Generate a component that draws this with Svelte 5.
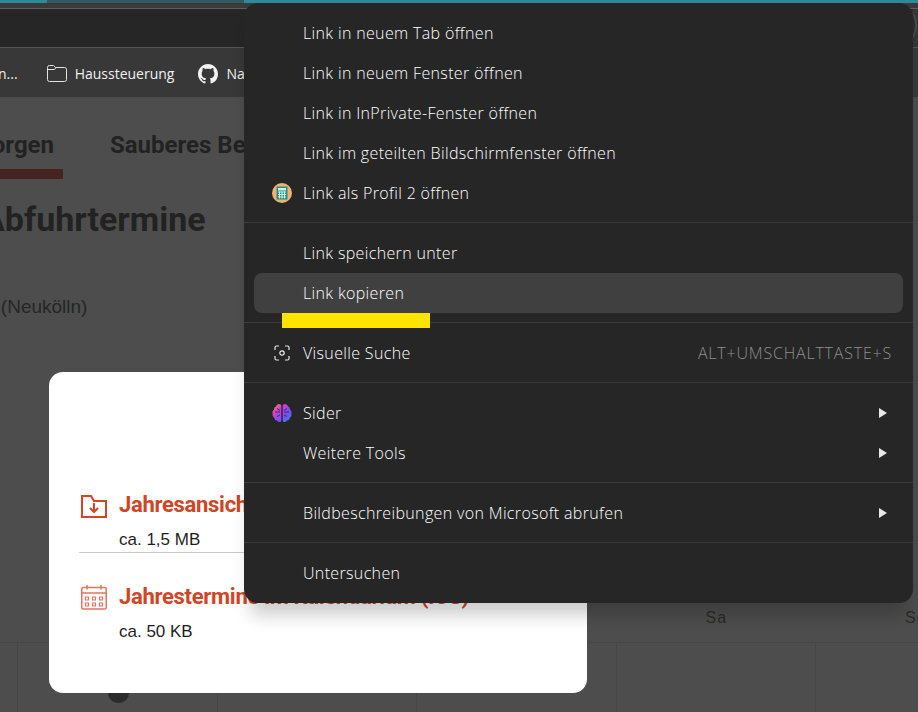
<script>
	const bookmarks = [
		{ label: 'n...', icon: null },
		{ label: 'Haussteuerung', icon: 'folder' },
		{ label: 'Nachrichten', icon: 'github' }
	];

	const menu = [
		[
			{ label: 'Link in neuem Tab öffnen' },
			{ label: 'Link in neuem Fenster öffnen' },
			{ label: 'Link in InPrivate-Fenster öffnen' },
			{ label: 'Link im geteilten Bildschirmfenster öffnen' },
			{ label: 'Link als Profil 2 öffnen', icon: 'profile' }
		],
		[{ label: 'Link speichern unter' }, { label: 'Link kopieren', active: true }],
		[{ label: 'Visuelle Suche', icon: 'lens', hint: 'ALT+UMSCHALTTASTE+S' }],
		[{ label: 'Sider', icon: 'brain', more: true }, { label: 'Weitere Tools', more: true }],
		[{ label: 'Bildbeschreibungen von Microsoft abrufen', more: true }],
		[{ label: 'Untersuchen' }]
	];

	// calendar is scrolled, only the end of the week is on screen
	const days = ['', 'Mi', 'Do', 'Fr', 'Sa', 'So'];
</script>

<div class="window">
	<div class="tabstrip">
		<div class="accent first"></div>
		<div class="accent dim"></div>
		<div class="accent"></div>
	</div>
	<div class="toolbar"></div>
	<div class="bookmarks">
		{#each bookmarks as b}
			<div class="bookmark">
				{#if b.icon === 'folder'}
					<svg width="20" height="20" viewBox="0 0 20 20" fill="none" stroke="#e4e4e4" stroke-width="1">
						<path d="M.5 3.500q0-2 2-2h4l2 2h9q2 0 2 2v10q0 2-2 2h-15q-2 0-2-2z" />
						<path d="M.5 5.500h7l1.500-2" />
					</svg>
				{:else if b.icon === 'github'}
					<svg width="20" height="20" viewBox="0 0 16 16" fill="#f2f2f2">
						<path d="M8 0C3.580 0 0 3.580 0 8c0 3.540 2.290 6.530 5.470 7.590.4.070.55-.17.55-.38 0-.19-.01-.82-.01-1.490-2.010.37-2.530-.49-2.690-.94-.09-.23-.48-.94-.82-1.130-.28-.15-.68-.52-.01-.53.63-.01 1.080.58 1.230.82.720 1.210 1.870.870 2.330.66.070-.52.280-.870.510-1.070-1.780-.2-3.640-.89-3.640-3.950 0-.87.310-1.590.820-2.150-.08-.2-.36-1.020.08-2.120 0 0 .67-.21 2.200.82.640-.18 1.320-.27 2-.27s1.360.09 2 .27c1.530-1.040 2.200-.82 2.200-.82.440 1.100.160 1.920.08 2.120.510.560.820 1.270.820 2.150 0 3.070-1.870 3.750-3.650 3.950.290.250.540.730.540 1.480 0 1.070-.01 1.930-.01 2.200 0 .210.150.460.550.380A8.010 8.010 0 0 0 16 8c0-4.420-3.580-8-8-8z" />
					</svg>
				{/if}
				<span>{b.label}</span>
			</div>
		{/each}
	</div>

	<main class="page">
		<nav class="tabs">
			<div class="nav-tab selected">Entsorgen</div>
			<div class="nav-tab">Sauberes Berlin</div>
		</nav>
		<h1>Abfuhrtermine</h1>
		<p class="district">Berlin (Neukölln)</p>
		<div class="calendar">
			<div class="day-names">
				{#each days as d}<span>{d}</span>{/each}
			</div>
			<div class="cells">
				{#each days as d}<div class="cell"></div>{/each}
			</div>
		</div>
	</main>

	<section class="dialog">
		<div class="download first">
			<svg class="dl-icon" width="26" height="23" viewBox="0 0 26 23" fill="none" stroke="#cf4526" stroke-width="2">
				<path d="M1 22V1h9l3 5h12v16z" />
				<path d="M13 8v9M9 13l4 4 4-4" />
			</svg>
			<div>
				<div class="dl-title">Jahresansicht als PDF</div>
				<div class="dl-size">ca. 1,5 MB</div>
			</div>
		</div>
		<div class="download">
			<svg class="dl-icon cal" width="26" height="25" viewBox="0 0 26 25" fill="none" stroke="#e2755c" stroke-width="1.500">
				<rect x=".75" y="2.500" width="24.500" height="21.500" rx="1.500" />
				<path d="M.75 8h24.500M6 0v4.500M20 0v4.500" />
				<path d="M4.500 12h3v3h-3zM11.500 12h3v3h-3zM18.500 12h3v3h-3zM4.500 18h3v3h-3zM11.500 18h3v3h-3zM18.500 18h3v3h-3z" stroke-width="1.200" />
			</svg>
			<div>
				<div class="dl-title">Jahrestermine im Kalendarium (ICS)</div>
				<div class="dl-size">ca. 50 KB</div>
			</div>
		</div>
	</section>
	<div class="dot"></div>

	<div class="halo"></div>
	<div class="menu">
		{#each menu as group, i}
			{#if i > 0}<div class="sep"></div>{/if}
			{#each group as item}
				<div class="item" class:active={item.active}>
					<span class="slot">
						{#if item.icon === 'profile'}
							<svg width="20" height="20" viewBox="0 0 20 20">
								<circle cx="10" cy="10" r="10" fill="#f5b06f" />
								<rect x="4.500" y="3.500" width="11" height="13" fill="#1f8f87" />
								<rect x="6" y="5" width="8" height="2.500" fill="#cfeee8" />
								<path d="M6 9h8M6 11.500h8M6 14h8M7.500 8.500v7M10 8.500v7M12.500 8.500v7" stroke="#cfeee8" stroke-width="1" />
							</svg>
						{:else if item.icon === 'lens'}
							<svg class="lens" width="16" height="16" viewBox="0 0 16 16" fill="none" stroke="#e8e8e8" stroke-width="1.200">
								<path d="M1 5V2.500Q1 1 2.500 1H5M11 1h2.500Q15 1 15 2.500V5M15 11v2.500q0 1.500-1.500 1.500H11M5 15H2.500Q1 15 1 13.500V11" />
								<circle cx="8" cy="8" r="2.200" />
							</svg>
						{:else if item.icon === 'brain'}
							<svg width="20" height="20" viewBox="0 0 20 20">
								<defs>
									<linearGradient id="brain" x1="0" y1="0" x2="1" y2="1">
										<stop offset="0" stop-color="#f59a3c" />
										<stop offset=".3" stop-color="#d63fd0" />
										<stop offset=".65" stop-color="#7a4cf0" />
										<stop offset="1" stop-color="#2f8cf5" />
									</linearGradient>
								</defs>
								<path fill="url(#brain)" d="M9.300 2.500Q9 1 7 1 4.500 1 4 3.500 2 4 2 6.500 0 8 .5 10.500 0 13 2 14.500 2.500 17 5 17.500 6 19 7.500 19 9.300 19 9.300 17.500zM10.700 2.500Q11 1 13 1 15.500 1 16 3.500 18 4 18 6.500 20 8 19.500 10.500 20 13 18 14.500 17.500 17 15 17.500 14 19 12.500 19 10.700 19 10.700 17.500z" />
								<path d="M3 9h5M12 9h5M5 5.500l3 2M15 5.500l-3 2M5 13.500l3-1.500M15 13.500l-3-1.500" stroke="#3a2a70" stroke-width="1" fill="none" />
							</svg>
						{/if}
					</span>
					<span class="label">{item.label}</span>
					{#if item.hint}<span class="hint">{item.hint}</span>{/if}
					{#if item.more}
						<svg class="more" width="8" height="10" viewBox="0 0 8 10"><path d="M0 0l8 5-8 5z" fill="#e8e8e8" /></svg>
					{/if}
				</div>
			{/each}
		{/each}
	</div>

	<div class="marker"></div>
</div>

<style>
	:global(body) {
		background: #4d4d4d;
		overflow: hidden;
	}
	.window {
		position: relative;
		width: 918px;
		height: 712px;
		overflow: hidden;
		display: flex;
		flex-direction: column;
		font-family: 'Open Sans', sans-serif;
	}
	.tabstrip {
		height: 9px;
		flex: none;
		display: flex;
		background: #3a3a3a;
		border-bottom: 1px solid #5f5f5f;
		box-sizing: border-box;
	}
	.accent {
		height: 3px;
		flex: 1;
		background: #2b8a9e;
	}
	.accent.first {
		flex: 0 0 47px;
	}
	.accent.dim {
		flex: 0 0 197px;
		background: #2f5a60;
	}
	.toolbar {
		height: 38px;
		flex: none;
		background: linear-gradient(to right, #262626 913px, #363636 913px);
		border-bottom: 1px solid #555;
	}
	.bookmarks {
		height: 49px;
		flex: none;
		box-sizing: border-box;
		padding-top: 2px;
		background: #383838;
		display: flex;
		align-items: center;
		gap: 24px;
		color: #f0f0f0;
		font-size: 14px;
		margin-left: -2px;
	}
	.bookmark {
		display: flex;
		align-items: center;
		gap: 8px;
		white-space: nowrap;
	}
	.bookmark:first-child {
		margin-right: 5px;
	}
	.page {
		flex: 1;
		background: #4d4d4d;
		color: #222;
		display: flex;
		flex-direction: column;
		font-family: 'Liberation Sans', sans-serif;
	}
	.tabs {
		display: flex;
		gap: 47px;
		height: 82px;
		margin-left: -60px;
		flex: none;
		font-family: Roboto, sans-serif;
		font-weight: 700;
		font-size: 24px;
		white-space: nowrap;
	}
	.nav-tab {
		padding-top: 34px;
		height: 82px;
		box-sizing: border-box;
		border-bottom: 10px solid transparent;
	}
	.nav-tab.selected {
		border-bottom-color: #45241f;
		width: 123px;
		padding-right: 9px;
		text-align: right;
	}
	h1 {
		margin: 20px 0 1px -18px;
		font-family: Roboto, sans-serif;
		font-size: 34px;
		line-height: 40px;
		font-weight: 700;
		white-space: nowrap;
	}
	.district {
		margin: 56px 0 0 -53px;
		font-size: 19px;
		line-height: 22px;
		color: #262626;
		white-space: nowrap;
	}
	.calendar {
		margin-top: 291px;
	}
	.day-names {
		display: grid;
		grid-template-columns: 18px repeat(5, 199.500px);
		height: 33px;
		font-size: 16px;
		letter-spacing: 1px;
		color: #2a2a2a;
	}
	.day-names span {
		text-align: center;
	}
	.cells {
		display: grid;
		grid-template-columns: 18px repeat(5, 199.500px);
		height: 80px;
		border-top: 1px solid #464646;
	}
	.cell {
		border-right: 1px solid #464646;
	}
	.dialog {
		position: absolute;
		left: 49px;
		top: 372px;
		width: 538px;
		height: 321px;
		box-sizing: border-box;
		background: #fff;
		border-radius: 14px;
		padding: 119px 30px 0;
	}
	.download {
		display: flex;
		gap: 12px;
		height: 61px;
		padding-left: 2px;
		align-items: flex-start;
		font-family: 'Liberation Sans', sans-serif;
	}
	.download.first {
		border-bottom: 1px solid #c8c8c8;
		margin-bottom: 30px;
	}
	.dl-icon {
		margin-top: 4px;
		flex: none;
	}
	.dl-icon.cal {
		margin-top: 2px;
	}
	.dl-title {
		color: #cf4526;
		font-family: Roboto, sans-serif;
		font-size: 22px;
		font-weight: 700;
		line-height: 28px;
		letter-spacing: -0.3px;
		white-space: nowrap;
	}
	.dl-size {
		color: #1e1e1e;
		font-size: 17px;
		line-height: 24px;
		margin-top: 9px;
	}
	.dot {
		position: absolute;
		left: 108px;
		top: 693px;
		width: 21px;
		height: 10px;
		border-radius: 0 0 11px 11px;
		background: #2b2b2b;
	}
	.halo {
		position: absolute;
		left: 860px;
		top: 3px;
		width: 55px;
		height: 44px;
		background: #2a2a2a;
		border-right: 2px solid #484848;
		border-radius: 0 26px 26px 0;
	}
	.menu {
		position: absolute;
		left: 244px;
		top: 3px;
		width: 669px;
		height: 600px;
		box-sizing: border-box;
		padding: 10px;
		background: #262626;
		border-radius: 14px;
		box-shadow: 0 18px 18px -6px rgba(0, 0, 0, 0.2);
		color: #fff;
		font-size: 16px;
		font-weight: 300;
		letter-spacing: 0.35px;
	}
	.sep {
		height: 1px;
		margin: 9px -10px 10px;
		background: #3b3b3b;
	}
	.item {
		height: 40px;
		display: flex;
		align-items: center;
		border-radius: 8px;
		padding-right: 16px;
		white-space: nowrap;
	}
	.item.active {
		background: #404040;
	}
	.slot {
		width: 48px;
		padding-left: 18px;
		box-sizing: border-box;
		flex: none;
		display: flex;
		align-items: center;
		height: 20px;
	}
	.lens {
		margin-left: 2px;
	}
	.label {
		flex: 1;
		padding-left: 1px;
	}
	.hint {
		color: #8f8f8f;
		letter-spacing: 0.8px;
		margin-right: -5px;
	}
	.marker {
		position: absolute;
		left: 282px;
		top: 313px;
		width: 148px;
		height: 15px;
		background: #ffe400;
	}
</style>
